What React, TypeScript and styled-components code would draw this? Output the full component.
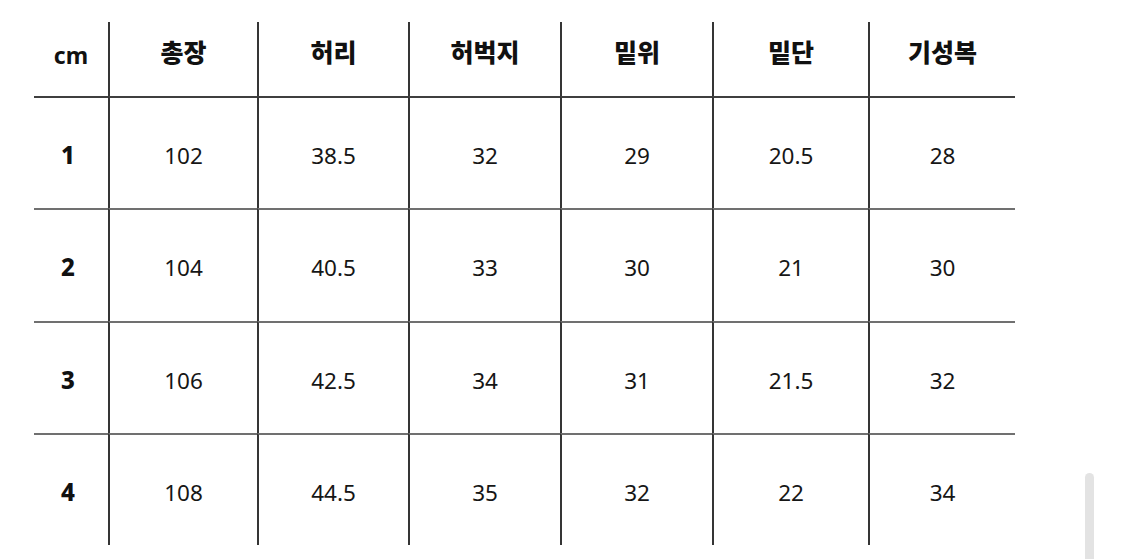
import styled, { createGlobalStyle } from 'styled-components'

const GlobalStyle = createGlobalStyle`
  html, body {
    margin: 0;
    padding: 0;
    background: #ffffff;
  }
  body {
    font-family: 'Noto Sans', 'Noto Sans CJK KR', sans-serif;
    color: #111;
  }
`

const Page = styled.div`
  position: relative;
  width: 1125px;
  height: 559px;
  overflow: hidden;
  padding: 22px 0 0 34px;
  box-sizing: border-box;
`

const Grid = styled.div`
  display: grid;
  grid-template-columns: 74px 149px 151px 152px 152px 156px 147px;
  grid-template-rows: 74px 112px 113px 112px 112px;
  width: 981px;
`

const Cell = styled.div<{ $col: number; $row: number }>`
  box-sizing: border-box;
  display: flex;
  align-items: center;
  justify-content: center;
  border-left: ${(p) => (p.$col > 0 ? '2px solid #353535' : 'none')};
  border-top: ${(p) =>
    p.$row === 0 ? 'none' : p.$row === 1 ? '2px solid #3f3f3f' : '2px solid #707070'};
`

const HeadCell = styled(Cell)`
  padding-bottom: 16px;
  font-family: 'Noto Sans CJK KR', 'Noto Sans', sans-serif;
  font-weight: 900;
  font-size: 25px;
  color: #111;
`

const UnitCell = styled(HeadCell)`
  padding-bottom: 8px;
  font-family: 'Noto Sans', sans-serif;
  font-weight: 700;
  font-size: 23px;
`

const SizeCell = styled(Cell)`
  padding-top: 2px;
  padding-right: 6px;
  font-family: 'Noto Sans', sans-serif;
  font-weight: 800;
  font-size: 24px;
`

const ValueCell = styled(Cell)`
  padding-top: 4px;
  font-family: 'Noto Sans', sans-serif;
  font-weight: 400;
  font-size: 22.5px;
  color: #161616;
`

const ScrollThumb = styled.div`
  position: absolute;
  left: 1085px;
  top: 473px;
  width: 9px;
  height: 100px;
  border-radius: 5px;
  background: #e3e3e3;
`

const headers = ['총장', '허리', '허벅지', '밑위', '밑단', '기성복']

const rows = [
  { size: '1', values: ['102', '38.5', '32', '29', '20.5', '28'] },
  { size: '2', values: ['104', '40.5', '33', '30', '21', '30'] },
  { size: '3', values: ['106', '42.5', '34', '31', '21.5', '32'] },
  { size: '4', values: ['108', '44.5', '35', '32', '22', '34'] },
]

export default function App() {
  return (
    <>
      <GlobalStyle />
      <Page>
        <Grid>
          <UnitCell $col={0} $row={0}>cm</UnitCell>
          {headers.map((h, i) => (
            <HeadCell key={h} $col={i + 1} $row={0}>
              {h}
            </HeadCell>
          ))}
          {rows.map((r, ri) => [
            <SizeCell key={'s' + r.size} $col={0} $row={ri + 1}>
              {r.size}
            </SizeCell>,
            ...r.values.map((v, vi) => (
              <ValueCell key={r.size + '-' + vi} $col={vi + 1} $row={ri + 1}>
                {v}
              </ValueCell>
            )),
          ])}
        </Grid>
        <ScrollThumb />
      </Page>
    </>
  )
}
